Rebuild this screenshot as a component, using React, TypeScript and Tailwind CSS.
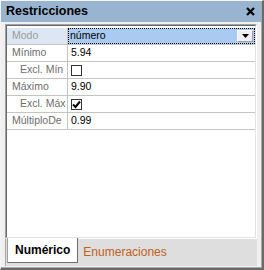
export default function App() {
  const font = "font-['Liberation_Sans',Arial,sans-serif]";
  const Row = ({
    label,
    indent,
    children,
    selected,
  }: {
    label: string;
    indent?: boolean;
    children?: React.ReactNode;
    selected?: boolean;
  }) => (
    <div className="flex h-[17px] border-b border-[#c4c4c4]">
      <div
        className={`w-[61px] shrink-0 flex items-center border-r border-[#c4c4c4] overflow-hidden whitespace-nowrap text-[10.5px] ${
          indent ? "pl-[13px]" : "pl-[5px]"
        } ${selected ? "bg-[#dde7f3] text-[#9a9a9a]" : "text-[#6e6e6e]"}`}
      >
        {label}
      </div>
      <div className="flex-1 flex items-center min-w-0">{children}</div>
    </div>
  );

  return (
    <div className={`w-[264px] h-[270px] ${font} border-t border-l border-[#f4f4f4] border-r-2 border-b-2 border-r-[#6a6a6a] border-b-[#6a6a6a]`}>
      <div className="h-full flex flex-col bg-[#f0f0f0] border-r border-b border-[#a8a8a8]">
        <div className="h-[21px] shrink-0 bg-[#99b4d1] flex items-center justify-between pl-[5px] pr-[5px]">
          <span className="text-[12.5px] font-bold text-black leading-none">Restricciones</span>
          <svg width="9" height="9" viewBox="0 0 9 9" className="mr-[1px]">
            <path d="M1 1 L8 8 M8 1 L1 8" stroke="#000" strokeWidth="2.2" />
          </svg>
        </div>
        <div className="flex-1 flex flex-col px-[4px] pt-[2px] min-h-0">
          <div className="flex-1 border-t border-l border-[#a0a0a0] border-r border-b border-r-white border-b-white min-h-0">
            <div className="h-full border-t border-l border-[#696969] border-r border-b border-r-[#e3e3e3] border-b-[#e3e3e3] bg-white pt-[2px]">
              <Row label="Modo" selected>
                <div className="h-full flex-1 flex items-center bg-[#a9cbf1] outline-1 outline-dotted outline-black -outline-offset-1 pl-[2px] pr-[2px]">
                  <span className="text-[10.5px] text-black flex-1">número</span>
                  <div className="w-[16px] h-[12px] bg-[#f0f0f0] border border-t-white border-l-white border-r-[#a0a0a0] border-b-[#a0a0a0] flex items-center justify-center">
                    <svg width="7" height="4" viewBox="0 0 7 4">
                      <path d="M0 0 H7 L3.5 4 Z" fill="#000" />
                    </svg>
                  </div>
                </div>
              </Row>
              <Row label="Mínimo">
                <span className="pl-[3px] text-[10.5px] text-black">5.94</span>
              </Row>
              <Row label="Excl. Mín" indent>
                <div className="ml-[3px] w-[11px] h-[11px] border border-[#333] bg-white" />
              </Row>
              <Row label="Máximo">
                <span className="pl-[3px] text-[10.5px] text-black">9.90</span>
              </Row>
              <Row label="Excl. Máx" indent>
                <div className="ml-[3px] w-[11px] h-[11px] border border-[#333] bg-white flex items-center justify-center">
                  <svg width="9" height="9" viewBox="0 0 9 9">
                    <path d="M1 4.5 L3.5 7 L8 1.5" stroke="#000" strokeWidth="2" fill="none" />
                  </svg>
                </div>
              </Row>
              <Row label="MúltiploDe">
                <span className="pl-[3px] text-[10.5px] text-black">0.99</span>
              </Row>
            </div>
          </div>
          <div className="h-[27px] shrink-0 bg-[#dedede] border-l border-[#a8a8a8] flex items-start mb-[1px]">
            <div className="h-[25px] -mt-[1px] ml-[1px] px-[7px] bg-white border-l border-[#a0a0a0] border-r border-b border-r-[#6e6e6e] border-b-[#6e6e6e] flex items-center">
              <span className="text-[12px] font-bold text-black">Numérico</span>
            </div>
            <div className="h-[25px] flex items-center pl-[5px]">
              <span className="text-[12px] text-[#c0601a]">Enumeraciones</span>
            </div>
          </div>
        </div>
      </div>
    </div>
  );
}
